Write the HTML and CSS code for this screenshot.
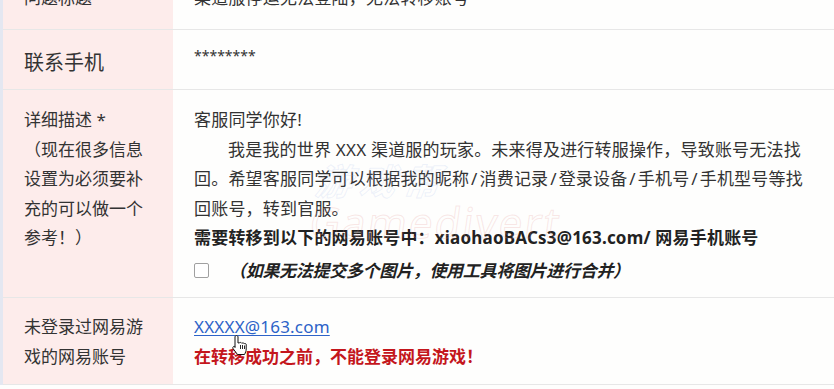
FILE: index.html
```html
<!DOCTYPE html>
<html lang="zh-CN">
<head>
<meta charset="utf-8">
<title>表单</title>
<link rel="stylesheet" href="styles.css">
</head>
<body>
<div class="form">
  <div class="row r1">
    <div class="label">问题标题 *</div>
    <div class="value">渠道服停运无法登陆，无法转移账号</div>
  </div>
  <div class="row r2">
    <div class="label big">联系手机</div>
    <div class="value stars">********</div>
  </div>
  <div class="row r3">
    <div class="label">详细描述 *<br>（现在很多信息<br>设置为必须要补<br>充的可以做一个<br>参考！）</div>
    <div class="value">
      <p class="para">客服同学你好!</p>
      <p class="para indent">我是我的世界 XXX 渠道服的玩家。未来得及进行转服操作，导致账号无法找<br>回。希望客服同学可以根据我的昵称&#8202;/&#8202;消费记录&#8202;/&#8202;登录设备&#8202;/&#8202;手机号&#8202;/&#8202;手机型号等找<br>回账号，转到官服。</p>
      <p class="para strong">需要转移到以下的网易账号中：xiaohaoBACs3@163.com/ 网易手机账号</p>
      <div class="check"><span class="box"></span><em class="note">（如果无法提交多个图片，使用工具将图片进行合并）</em></div>
      <div class="watermark" aria-hidden="true"><span class="wm-top">游戏帮</span><span class="wm-main">Gamedivert</span></div>
    </div>
  </div>
  <div class="row r4">
    <div class="label">未登录过网易游<br>戏的网易账号</div>
    <div class="value">
      <a class="link" href="#">XXXXX@163.com</a>
      <p class="para warn">在转移成功之前，不能登录网易游戏！</p>
      <svg class="cursor" width="17" height="22" viewBox="0 0 17 22" aria-hidden="true">
        <path d="M5.5 1.5C6.3 1.5 7 2.2 7 3V9L8.4 8.8C8.9 8.3 9.9 8.3 10.4 8.8L10.9 9.3C11.4 8.8 12.4 8.8 12.9 9.3L13.2 9.7C13.8 9.3 14.9 9.5 15.2 10.3V15C15.2 17 14.5 18.5 13.5 20.5H6.5L2.2 14.8C1.6 14 1.7 13.1 2.4 12.6C3 12.2 3.8 12.3 4.2 12.9L4 13.5V3C4 2.2 4.7 1.5 5.5 1.5Z" fill="#fff" stroke="#111" stroke-width="1"/>
        <path d="M9.5 11V15M11.5 11V15M13.5 11.5V15" stroke="#111" stroke-width="0.9" fill="none"/>
      </svg>
    </div>
  </div>
</div>
</body>
</html>
```

FILE: styles.css
```css
* { box-sizing: border-box; }

body {
  margin: 0;
  background: #fefefd;
  font-family: "Noto Sans", "Noto Sans CJK SC", sans-serif;
  color: #333;
  overflow: hidden;
}

.form {
  margin-top: -31px;
  border-left: 3px solid #e4e7f1;
}

.row {
  display: grid;
  grid-template-columns: 170px 1fr;
  border-bottom: 1px solid #e7e7e7;
}

.label {
  background: #fdeceb;
  padding: 14px 8px 0 21px;
  font-size: 17px;
  line-height: 29.5px;
  color: #333;
}

.label.big {
  font-size: 20px;
  padding-top: 18px;
}

.value {
  position: relative;
  padding: 14px 16px 12px 21px;
  font-size: 17px;
  line-height: 29.5px;
  letter-spacing: 0.2px;
  color: #333;
}

.r1 { height: 61px; }
.r2 { height: 60px; }

.r3 .label, .r3 .value { padding-top: 15px; }

.stars {
  font-size: 14px;
  padding-top: 11px;
  letter-spacing: 0;
}

.para {
  margin: 0;
  white-space: nowrap;
}

.indent { text-indent: 2em; }

.strong { font-weight: 700; color: #222; letter-spacing: 0.2px; }

.check {
  display: flex;
  align-items: center;
  margin-top: 3px;
  line-height: 29.5px;
}

.box {
  width: 15px;
  height: 15px;
  border: 1px solid #a0a0a0;
  border-radius: 2px;
  background: #fff;
  margin-right: 20px;
  flex: none;
}

.note {
  font-weight: 700;
  font-style: italic;
  color: #222;
  letter-spacing: -0.3px;
}

.watermark {
  position: absolute;
  left: 140px;
  top: 72px;
  display: flex;
  flex-direction: column;
  pointer-events: none;
  transform: skewX(-8deg);
}

.wm-top {
  font-size: 36px;
  line-height: 40px;
  font-weight: 700;
  font-style: italic;
  color: transparent;
  -webkit-text-stroke: 1px rgba(150, 175, 230, 0.18);
  letter-spacing: 8px;
}

.wm-main {
  font-size: 42px;
  line-height: 40px;
  color: transparent;
  -webkit-text-stroke: 1px rgba(230, 160, 160, 0.25);
  letter-spacing: 2px;
}

.r4 .value { padding-bottom: 13px; }

.link {
  color: #2d63c8;
  text-decoration: underline;
  text-underline-offset: 2px;
  display: inline-block;
}

.warn {
  color: #c4161c;
  font-weight: 700;
  letter-spacing: 0;
}

.cursor {
  position: absolute;
  left: 58px;
  top: 36px;
}
```
